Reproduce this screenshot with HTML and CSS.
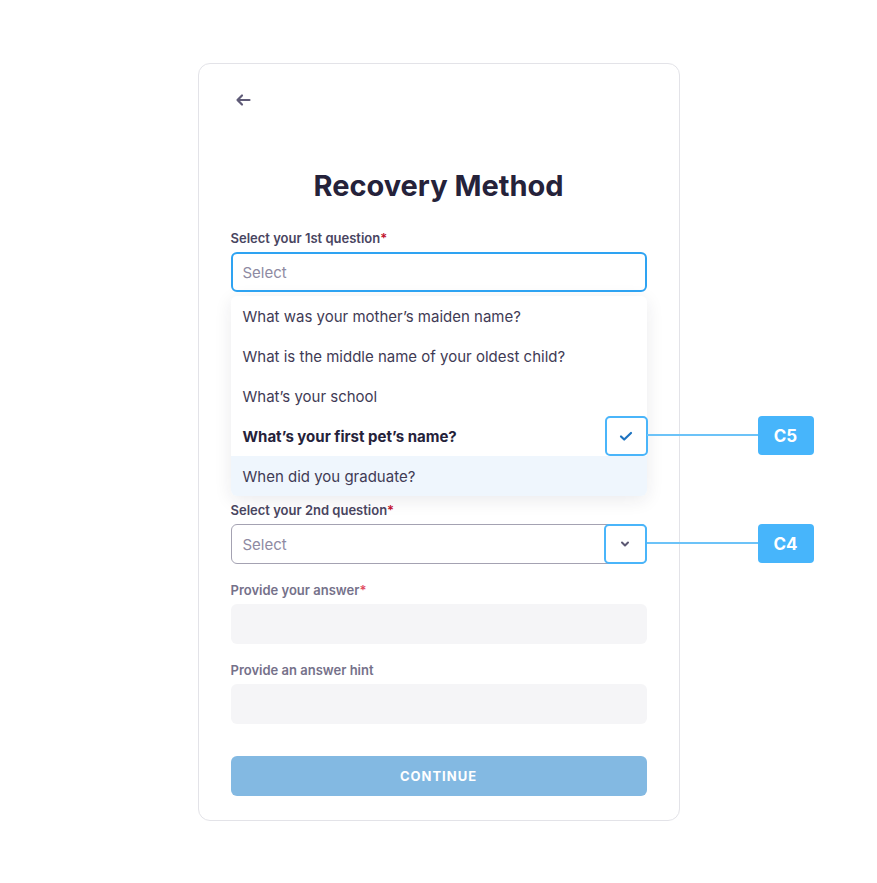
FILE: index.html
```html
<!DOCTYPE html>
<html lang="en">
<head>
  <meta charset="UTF-8">
  <meta name="viewport" content="width=device-width, initial-scale=1.0">
  <title>Recovery Method</title>
  <link rel="stylesheet" href="styles.css">
</head>
<body>
  <main class="page">
    <section class="card">
      <button class="back" aria-label="Back">
        <svg width="24" height="24" viewBox="0 0 24 24" fill="none" stroke="currentColor" stroke-width="2.2" stroke-linecap="round" stroke-linejoin="round">
          <path d="M18.5 12H6.5M11 7.5l-4.5 4.5 4.5 4.5"/>
        </svg>
      </button>

      <h1>Recovery Method</h1>

      <!-- 1st question, list open -->
      <div class="field open">
        <label>Select your 1st question<span class="req">*</span></label>
        <div class="select focus">Select</div>
        <ul class="menu">
          <li>What was your mother’s maiden name?</li>
          <li>What is the middle name of your oldest child?</li>
          <li>What’s your school</li>
          <li class="picked">What’s your first pet’s name?
            <span class="mark">
              <svg width="16" height="16" viewBox="0 0 16 16" fill="none" stroke="currentColor" stroke-width="2.2" stroke-linecap="round" stroke-linejoin="round"><path d="M3 8.5l3.2 3L13 5"/></svg>
            </span>
            <span class="tag">C5</span>
          </li>
          <li class="hover">When did you graduate?</li>
        </ul>
      </div>

      <div class="field">
        <label>Select your 2nd question<span class="req">*</span></label>
        <div class="select">Select
          <span class="mark">
            <svg width="14" height="14" viewBox="0 0 14 14" fill="none" stroke="currentColor" stroke-width="2" stroke-linecap="round" stroke-linejoin="round"><path d="M4 5.5l3 3 3-3"/></svg>
          </span>
          <span class="tag">C4</span>
        </div>
      </div>

      <div class="field">
        <label class="muted">Provide your answer<span class="req">*</span></label>
        <div class="input"></div>
      </div>

      <div class="field">
        <label class="muted">Provide an answer hint</label>
        <div class="input"></div>
      </div>

      <button class="continue">CONTINUE</button>
    </section>
  </main>
</body>
</html>
```

FILE: styles.css
```css
:root {
  --ink: #25223a;
  --label: #49455f;
  --muted: #75718a;
  --blue: #2ea3f2;
  --note: #4ab5fa;
  --radius: 6px;
}
* {box-sizing: border-box;font-family: Inter, "Liberation Sans", sans-serif;}
body{margin:0;background:#fff;color:var(--ink);}
.page{display:flex;justify-content:center;padding-top:63px;}

.card{width:482px;border:1px solid #e3e3e8;border-radius:12px;padding:24px 32px 24px;display:flex;flex-direction:column;}

.back{width:24px;height:24px;padding:0;border:none;background:none;color:#5f5b77;cursor:pointer;display:flex;}
h1{margin:56px 0 26px;font-size:29px;line-height:36px;font-weight:700;text-align:center;color:var(--ink);}

.field{display:flex;flex-direction:column;margin-bottom:18px;}
.field.open{margin-bottom:6px;}
label{font-size:13px;line-height:16px;font-weight:600;color:var(--label);margin-bottom:6px;}
label.muted{color:var(--muted);}
.req{color:#c1102d;}
label.muted .req{color:#df4a5e;}

.select{position:relative;height:40px;border:1px solid #a4a2b2;border-radius:var(--radius);padding:0 11px;display:flex;align-items:center;font-size:15px;color:#8e8aa2;}
.select.focus{border:2px solid var(--blue);padding:0 10px;}

.menu{list-style:none;margin:4px 0 0;padding:0;border-radius:var(--radius);box-shadow:0 4px 18px rgba(30,30,60,.09);}
.menu li{position:relative;height:40px;display:flex;align-items:center;padding:0 12px;font-size:15px;color:#3f3b55;}
.menu li.picked{font-weight:700;color:var(--ink);}
.menu li.hover{background:#eff6fd;border-radius:0 0 var(--radius) var(--radius);}

/* annotation marks */
.mark{position:absolute;right:-1px;top:0;width:43px;height:40px;border:2px solid var(--note);border-radius:5px;background:#fff;display:flex;align-items:center;justify-content:center;}
.menu .mark{color:#1d73c0;}
.select .mark{top:-1px;right:-1px;color:#5c5873;}
.tag{position:absolute;left:calc(100% + 111px);top:0;width:56px;height:39px;border-radius:4px;background:#47b5fb;color:#fff;font-size:17px;font-weight:700;display:flex;align-items:center;justify-content:center;}
.select .tag{top:-1px;left:calc(100% + 112px);}
.tag::before{content:"";position:absolute;right:100%;top:18px;width:111px;height:2px;background:#6cc3f8;}

.input{height:40px;border-radius:var(--radius);background:#f5f5f7;}

.continue{margin-top:14px;height:40px;border:none;border-radius:var(--radius);background:#83b9e2;color:#fff;font-size:13px;font-weight:700;letter-spacing:1px;cursor:pointer;}
```
